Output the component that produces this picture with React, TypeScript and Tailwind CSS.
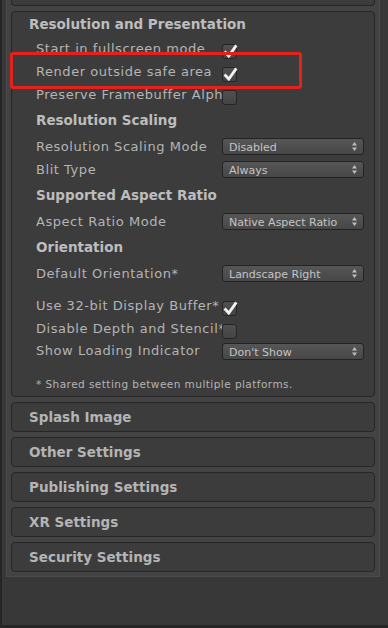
import type { ReactNode } from "react";

const font = { fontFamily: '"DejaVu Sans", Verdana, sans-serif' };

function Check({ on }: { on?: boolean }) {
  return (
    <div className="relative mt-[5px] w-[15px] h-[15px] rounded-[3px] border border-[#252525] bg-gradient-to-b from-[#505050] to-[#444444]">
      {on && (
        <svg className="absolute -left-[1px] -top-[2px]" width="17" height="17" viewBox="0 0 17 17">
          <path d="M3.5 9.5 L6.8 13 L13.5 3.5" fill="none" stroke="#f2f2f2" strokeWidth="2.8" strokeLinecap="square" />
        </svg>
      )}
    </div>
  );
}

function Drop({ value }: { value: string }) {
  return (
    <div className="flex items-center justify-between w-[142px] h-[17px] rounded-[3px] border border-[#232323] bg-gradient-to-b from-[#565656] to-[#474747] pl-[6px] pr-[6px] text-[11px] text-[#c4c4c4]">
      <span className="pt-[2px] leading-[13px]">{value}</span>
      <svg width="5" height="9" viewBox="0 0 5 9">
        <path d="M2.5 0 L5 3.5 L0 3.5 Z M0 5.5 L5 5.5 L2.5 9 Z" fill="#bdbdbd" />
      </svg>
    </div>
  );
}

function Row({ label, h = "h-[23px]", children }: { label: string; h?: string; children: ReactNode }) {
  return (
    <div className={`flex items-center ${h}`}>
      <div className="w-[186px] shrink-0 overflow-hidden whitespace-nowrap text-[13px] text-[#b4b4b4] tracking-[0.55px]">
        {label}
      </div>
      {children}
    </div>
  );
}

function Sub({ title }: { title: string }) {
  return (
    <div className="flex items-center h-[29px] font-bold text-[13.5px] text-[#bdbdbd]">{title}</div>
  );
}

const closed = ["Splash Image", "Other Settings", "Publishing Settings", "XR Settings", "Security Settings"];

export default function App() {
  return (
    <div style={font} className="relative w-[388px] h-[628px] overflow-hidden bg-[#383838] border-l-2 border-b-[3px] border-[#262626]">
      <div className="ml-[4px] w-[374px] flex flex-col gap-[5px] px-[4px] pb-[4px] bg-[#434343] border-x border-b border-[#4b4b4b]">
        <div className="h-[6px] rounded-b-[4px] border-x border-b border-[#262626] bg-[#3c3c3c]" />

        <div className="rounded-[4px] border border-[#262626] bg-[#3c3c3c] pl-[24px]">
          <div className="flex items-center h-[25px] -ml-[7px] font-bold text-[13.5px] text-[#bdbdbd]">
            Resolution and Presentation
          </div>
          <Row label="Start in fullscreen mode"><Check on /></Row>
          <Row label="Render outside safe area"><Check on /></Row>
          <Row label="Preserve Framebuffer Alpha"><Check /></Row>
          <Sub title="Resolution Scaling" />
          <Row label="Resolution Scaling Mode"><Drop value="Disabled" /></Row>
          <Row label="Blit Type"><Drop value="Always" /></Row>
          <Sub title="Supported Aspect Ratio" />
          <Row label="Aspect Ratio Mode"><Drop value="Native Aspect Ratio" /></Row>
          <Sub title="Orientation" />
          <Row label="Default Orientation*"><Drop value="Landscape Right" /></Row>
          <div className="h-[9px]" />
          <Row label="Use 32-bit Display Buffer*"><Check on /></Row>
          <Row label="Disable Depth and Stencil*"><Check /></Row>
          <Row label="Show Loading Indicator" h="h-[22px]"><Drop value="Don't Show" /></Row>
          <div className="h-[12px]" />
          <div className="flex items-center h-[22px] text-[10.5px] text-[#b4b4b4] tracking-[0.45px]">
            * Shared setting between multiple platforms.
          </div>
        </div>

        {closed.map((t) => (
          <div key={t} className="flex items-center h-[30px] rounded-[4px] border border-[#262626] bg-[#3c3c3c] pl-[17px] font-bold text-[13.5px] text-[#b4b4b4]">
            {t}
          </div>
        ))}
      </div>

      <div className="absolute left-[8px] top-[52px] w-[292px] h-[37px] rounded-[3px] border-[3px] border-[#e5211c]" />
    </div>
  );
}
